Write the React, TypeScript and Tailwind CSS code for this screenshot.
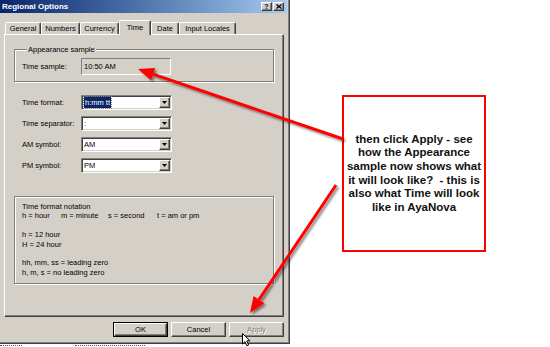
import React from "react";

const raised =
  "border border-t-white border-l-white border-r-[#404040] border-b-[#404040] shadow-[inset_-1px_-1px_0_#808080]";
const sunken =
  "border border-t-[#808080] border-l-[#808080] border-r-white border-b-white shadow-[inset_1px_1px_0_#404040,inset_-1px_-1px_0_#d4d0c8]";

function Combo({ value, selected }: { value: string; selected?: boolean }) {
  return (
    <div className={`w-[91px] h-[15px] p-[1px] flex bg-white ${sunken}`}>
      <div className="flex-1 flex items-center pl-[1px] text-[7.5px] leading-[11px]">
        {selected ? (
          <span className="bg-[#0a246a] text-white px-[1px] outline outline-1 outline-dotted outline-[#808080]">{value}</span>
        ) : (
          <span>{value}</span>
        )}
      </div>
      <div className={`w-[11px] h-full flex items-center justify-center bg-[#d4d0c8] ${raised}`}>
        <svg width="5" height="3" viewBox="0 0 5 3">
          <path d="M0 0h5L2.5 3z" fill="#000" />
        </svg>
      </div>
    </div>
  );
}

function Row({ label, value, selected }: { label: string; value: string; selected?: boolean }) {
  return (
    <div className="flex items-center pl-[8px] h-[15px]">
      <span className="w-[59px] whitespace-nowrap">{label}</span>
      <Combo value={value} selected={selected} />
    </div>
  );
}

const tabs: { name: string; w: string; sel?: boolean }[] = [
  { name: "General", w: "w-[36px]" },
  { name: "Numbers", w: "w-[39px]" },
  { name: "Currency", w: "w-[39px]" },
  { name: "Time", w: "w-[32px]", sel: true },
  { name: "Date", w: "w-[28px]" },
  { name: "Input Locales", w: "w-[57px]" },
];

function Btn({ label, def, disabled }: { label: string; def?: boolean; disabled?: boolean }) {
  const inner = (
    <div
      className={`w-full h-full flex items-center justify-center bg-[#d4d0c8] ${raised} ${
        disabled ? "text-[#808080] [text-shadow:1px_1px_0_#fff]" : "text-black"
      }`}
    >
      {label}
    </div>
  );
  return def ? (
    <div className="w-[55px] h-[15px] border border-black">{inner}</div>
  ) : (
    <div className="w-[55px] h-[15px]">{inner}</div>
  );
}

export default function App() {
  return (
    <div className="relative w-[550px] h-[347px] overflow-hidden bg-white font-['Liberation_Sans',Arial,sans-serif] text-[7.5px] leading-[9px] text-black flex items-start">
      {/* Dialog column */}
      <div className="flex flex-col">
        <div className="w-[290px] h-[344px] bg-[#d4d0c8] pr-[2px] pb-[2px] border-r border-b border-[#404040] shadow-[inset_-1px_-1px_0_#808080] flex flex-col">
          {/* Title bar */}
          <div className="h-[13px] w-full flex items-center justify-between pl-[2px] pr-[3px] bg-linear-to-r from-[#0a246a] to-[#a6caf0]">
            <span className="text-white font-bold text-[8px] leading-[10px]">Regional Options</span>
            <div className="flex gap-[1px]">
              <div className={`w-[11px] h-[9px] bg-[#d4d0c8] flex items-center justify-center font-bold text-[7px] leading-[7px] ${raised}`}>
                ?
              </div>
              <div className={`w-[11px] h-[9px] bg-[#d4d0c8] flex items-center justify-center ${raised}`}>
                <svg width="6" height="5" viewBox="0 0 6 5">
                  <path d="M0.5 0.5L5.5 4.5M5.5 0.5L0.5 4.5" stroke="#000" strokeWidth="1.3" />
                </svg>
              </div>
            </div>
          </div>

          {/* Tabs */}
          <div className="mt-[7px] pl-[4px]">
            <div className="h-[14px] flex items-end pl-[1px]">
              {tabs.map((t) =>
                t.sel ? (
                  <div
                    key={t.name}
                    className={`${t.w} h-[15px] -mb-[1px] relative z-10 bg-[#d4d0c8] border-t border-l border-r border-t-white border-l-white border-r-[#404040] rounded-t-[2px] shadow-[inset_-1px_0_0_#808080] flex items-start justify-center pt-[2px] whitespace-nowrap`}
                  >
                    {t.name}
                  </div>
                ) : (
                  <div
                    key={t.name}
                    className={`${t.w} h-[12px] border-t border-l border-r border-t-white border-l-white border-r-[#404040] rounded-t-[2px] shadow-[inset_-1px_0_0_#808080] flex items-center justify-center whitespace-nowrap`}
                  >
                    {t.name}
                  </div>
                )
              )}
            </div>

            {/* Panel */}
            <div className={`w-[280px] h-[283px] pt-[10px] pl-[9px] ${raised}`}>
              <fieldset className="w-[260px] border border-[#808080] shadow-[inset_1px_1px_0_#fff,1px_1px_0_#fff] pt-[4px] pb-[6px] pl-[7px]">
                <legend className="ml-[5px] px-[1px] bg-[#d4d0c8] leading-[9px]">Appearance sample</legend>
                <div className="flex items-center h-[17px]">
                  <span className="w-[59px]">Time sample:</span>
                  <div className="w-[90px] h-[17px] border border-t-[#808080] border-l-[#808080] border-r-white border-b-white flex items-center pl-[2px]">
                    10:50 AM
                  </div>
                </div>
              </fieldset>

              <div className="mt-[13px] flex flex-col gap-[6px]">
                <Row label="Time format:" value="h:mm tt" selected />
                <Row label="Time separator:" value=":" />
                <Row label="AM symbol:" value="AM" />
                <Row label="PM symbol:" value="PM" />
              </div>

              <div className="mt-[23px] w-[260px] border border-[#808080] shadow-[inset_1px_1px_0_#fff,1px_1px_0_#fff] pt-[5px] pb-[6px] pl-[7px] leading-[9.4px]">
                <div>Time format notation</div>
                <div className="flex whitespace-nowrap">
                  <span className="w-[39px]">h = hour</span>
                  <span className="w-[47px]">m = minute</span>
                  <span className="w-[49px]">s = second</span>
                  <span>t = am or pm</span>
                </div>
                <div className="h-[9.4px]" />
                <div>h = 12 hour</div>
                <div>H = 24 hour</div>
                <div className="h-[9.4px]" />
                <div>hh, mm, ss = leading zero</div>
                <div>h, m, s = no leading zero</div>
              </div>
            </div>

            {/* Buttons */}
            <div className="mt-[5px] w-[280px] flex justify-end gap-[3px]">
              <Btn label="OK" def />
              <Btn label="Cancel" />
              <Btn label="Apply" disabled />
            </div>
          </div>
        </div>
        {/* cut-off marks of window beneath */}
        <div className="h-[3px] flex items-end pb-[0px]">
          <div className="w-[22px] h-[2px] border-t border-dotted border-[#555]" />
          <div className="ml-[53px] w-[70px] h-[2px] border-t border-dotted border-[#555]" />
        </div>
      </div>

      {/* Annotation box */}
      <div className="ml-[52px] mt-[95px] w-[144px] h-[157px] border-2 border-[#ff0000] bg-white flex items-center justify-center text-center font-bold text-[11.5px] leading-[13.6px] text-[#111] font-['Liberation_Sans',Arial,sans-serif] whitespace-nowrap">
        <div>
          then click Apply - see
          <br />
          how the Appearance
          <br />
          sample now shows what
          <br />
          it will look like?&nbsp; - this is
          <br />
          also what Time will look
          <br />
          like in AyaNova
        </div>
      </div>

      {/* Arrows overlay */}
      <svg className="absolute left-0 top-0 pointer-events-none" width="550" height="347" viewBox="0 0 550 347">
        <defs>
          <filter id="sh" x="-20%" y="-20%" width="140%" height="140%">
            <feDropShadow dx="2" dy="2" stdDeviation="1.2" floodColor="#000" floodOpacity="0.45" />
          </filter>
        </defs>
        <g filter="url(#sh)">
          <line x1="343" y1="139" x2="153" y2="74.2" stroke="#ff0000" strokeWidth="3" />
          <polygon points="138,69 155.2,68 151,80.3" fill="#ff0000" />
          <line x1="336" y1="185" x2="259" y2="299.7" stroke="#ff0000" strokeWidth="3" />
          <polygon points="250,313 264.3,303.3 253.5,296.1" fill="#ff0000" />
        </g>
      </svg>

      {/* Mouse cursor */}
      <svg className="absolute left-[242px] top-[333px] pointer-events-none" width="10" height="14" viewBox="0 0 10 14">
        <path d="M0.5 0.5 L0.5 11 L3 8.6 L4.8 12.8 L6.6 12 L4.8 7.9 L8 7.9 Z" fill="#fff" stroke="#000" strokeWidth="1" />
      </svg>
    </div>
  );
}
